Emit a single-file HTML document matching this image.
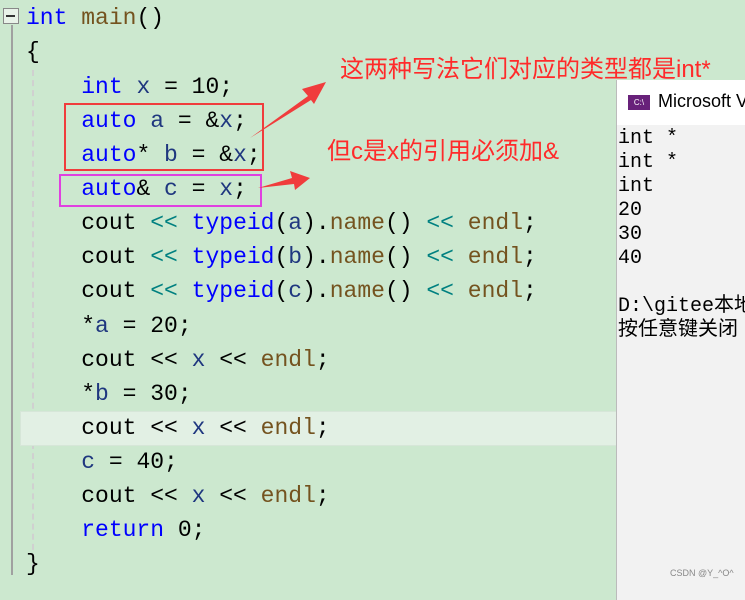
<!DOCTYPE html><html><head><meta charset="utf-8"><style>
body{margin:0;width:745px;height:587px;background:#cce8cf;position:relative;overflow:hidden;font-family:"Liberation Mono",monospace}
.l{position:absolute;left:26px;font-size:23px;line-height:34px;height:34px;white-space:pre;color:#000}
.k{color:#0000ff}.f{color:#74531f}.g{color:#008080}.v{color:#1f377f}.o{color:#008080}
.ann{position:absolute;z-index:5;color:#ff2a2a;font-family:"Liberation Sans","Noto Sans CJK SC",sans-serif;font-size:24px;line-height:28px;white-space:nowrap}
.con{position:absolute;left:616px;top:80px;width:140px;height:520px;background:#f2f2f2;border-left:1px solid #bbb}
.ct{position:absolute;left:0;top:0;width:140px;height:45px;background:#fff}
.cl{position:absolute;left:1px;font-family:"Liberation Mono","Noto Sans CJK SC",monospace;font-size:20px;line-height:24px;white-space:pre;color:#000}
</style></head><body>
<div style="position:absolute;left:3px;top:8px;width:14px;height:14px;border:1px solid #888;background:#e8f2e8"></div>
<div style="position:absolute;left:6px;top:15px;width:9px;height:2px;background:#333"></div>
<div style="position:absolute;left:11px;top:25px;width:2px;height:550px;background:#a0a0a0"></div>
<div style="position:absolute;left:32px;top:70px;width:0;height:500px;border-left:2px dashed #d0d0d0"></div>
<div style="position:absolute;left:20px;top:411px;width:600px;height:33px;background:#e2f0e4;border:1px solid #d6e6d8"></div>
<div class="l" style="top:1px"><span class="k">int</span> <span class="f">main</span>()</div>
<div class="l" style="top:35px">{</div>
<div class="l" style="top:70px">    <span class="k">int</span> <span class="v">x</span> = 10;</div>
<div class="l" style="top:104px">    <span class="k">auto</span> <span class="v">a</span> = &amp;<span class="v">x</span>;</div>
<div class="l" style="top:138px">    <span class="k">auto</span>* <span class="v">b</span> = &amp;<span class="v">x</span>;</div>
<div class="l" style="top:172px">    <span class="k">auto</span>&amp; <span class="v">c</span> = <span class="v">x</span>;</div>
<div class="l" style="top:206px">    cout <span class="o">&lt;&lt;</span> <span class="k">typeid</span>(<span class="v">a</span>).<span class="f">name</span>() <span class="o">&lt;&lt;</span> <span class="f">endl</span>;</div>
<div class="l" style="top:240px">    cout <span class="o">&lt;&lt;</span> <span class="k">typeid</span>(<span class="v">b</span>).<span class="f">name</span>() <span class="o">&lt;&lt;</span> <span class="f">endl</span>;</div>
<div class="l" style="top:274px">    cout <span class="o">&lt;&lt;</span> <span class="k">typeid</span>(<span class="v">c</span>).<span class="f">name</span>() <span class="o">&lt;&lt;</span> <span class="f">endl</span>;</div>
<div class="l" style="top:309px">    *<span class="v">a</span> = 20;</div>
<div class="l" style="top:343px">    cout &lt;&lt; <span class="v">x</span> &lt;&lt; <span class="f">endl</span>;</div>
<div class="l" style="top:377px">    *<span class="v">b</span> = 30;</div>
<div class="l" style="top:411px">    cout &lt;&lt; <span class="v">x</span> &lt;&lt; <span class="f">endl</span>;</div>
<div class="l" style="top:445px">    <span class="v">c</span> = 40;</div>
<div class="l" style="top:479px">    cout &lt;&lt; <span class="v">x</span> &lt;&lt; <span class="f">endl</span>;</div>
<div class="l" style="top:513px">    <span class="k">return</span> 0;</div>
<div class="l" style="top:547px">}</div>
<div style="position:absolute;left:64px;top:103px;width:196px;height:64px;border:2px solid #f03c3c"></div>
<div style="position:absolute;left:59px;top:174px;width:199px;height:29px;border:2px solid #e040e0"></div>
<svg style="position:absolute;left:0;top:0" width="745" height="587">
<polygon points="250,138 308,96 302,89 326,82 314,104 311,100" fill="#f03c3c"/>
<polygon points="258,188 292,178 290,171 310,178 295,190 294,184" fill="#f03c3c"/>
</svg>
<div class="con"><div class="ct">
<div style="position:absolute;left:11px;top:15px;width:22px;height:15px;background:#68217a;color:#fff;font-size:8px;line-height:15px;text-align:center;font-family:'Liberation Sans',sans-serif">C:\</div>
<div style="position:absolute;left:41px;top:11px;font-family:'Liberation Sans',sans-serif;font-size:18px;white-space:nowrap">Microsoft V</div></div>
<div class="cl" style="top:47px">int *
int *
int
20
30
40

D:\gitee本地
按任意键关闭</div></div>
<div class="ann" style="left:340px;top:56px">这两种写法它们对应的类型都是int*</div>
<div class="ann" style="left:327px;top:138px">但c是x的引用必须加&amp;</div>
<div style="position:absolute;left:670px;top:568px;font-family:'Liberation Sans',sans-serif;font-size:9px;color:#888">CSDN @Y_^O^</div>
</body></html>
